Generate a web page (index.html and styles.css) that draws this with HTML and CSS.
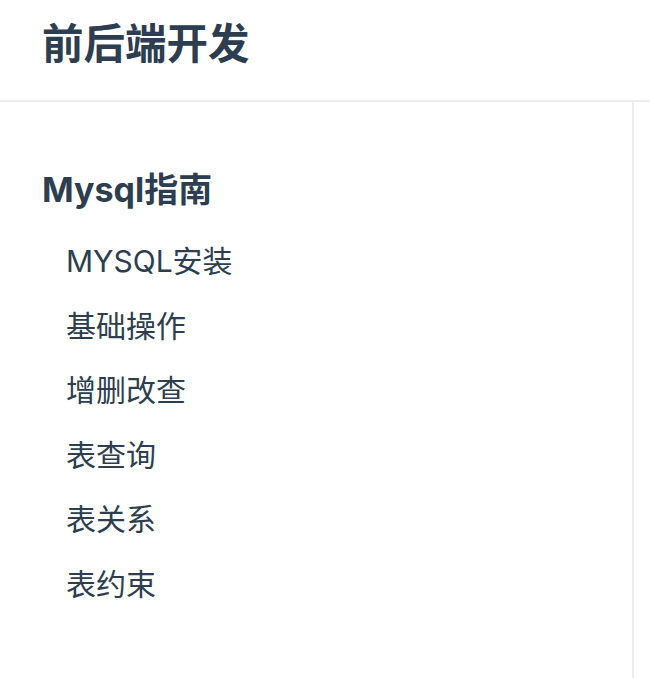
FILE: index.html
```html
<!DOCTYPE html>
<html lang="zh-CN">
<head>
<meta charset="utf-8">
<link rel="stylesheet" href="styles.css">
</head>
<body>
<header class="navbar">
  <span class="site-name">前后端开发</span>
</header>
<aside class="sidebar">
  <section class="group">
    <p class="group-title">Mysql指南</p>
    <ul class="links">
      <li><a class="link">MYSQL安装</a></li>
      <li><a class="link">基础操作</a></li>
      <li><a class="link">增删改查</a></li>
      <li><a class="link">表查询</a></li>
      <li><a class="link">表关系</a></li>
      <li><a class="link">表约束</a></li>
    </ul>
  </section>
</aside>
</body>
</html>
```
FILE: styles.css
```css
* { box-sizing: border-box; }
html, body {
  margin: 0;
  padding: 0;
  background: #fff;
  color: #2c3e50;
  font-family: Inter, "Noto Sans CJK SC", sans-serif;
}
body {
  display: flex;
  flex-direction: column;
  height: 678px;
  overflow: hidden;
}
.navbar {
  height: 102px;
  border-bottom: 2px solid #eaecef;
  padding: 0 0 0 42px;
  display: flex;
  align-items: center;
}
.site-name {
  font-size: 41.5px;
  font-weight: 700;
  line-height: 1;
  margin-top: -10px;
}
.sidebar {
  flex: 1;
  width: 634px;
  border-right: 2px solid #eaecef;
  padding-top: 64px;
}
.group-title {
  margin: 0;
  padding-left: 42px;
  font-size: 34px;
  font-weight: 700;
  line-height: 48px;
}
.links {
  list-style: none;
  margin: 0;
  padding: 15px 0 0 0;
}
.links li {
  height: 64.5px;
  display: flex;
  align-items: center;
}
.link {
  padding-left: 66px;
  font-size: 30px;
  line-height: 1;
}
```
